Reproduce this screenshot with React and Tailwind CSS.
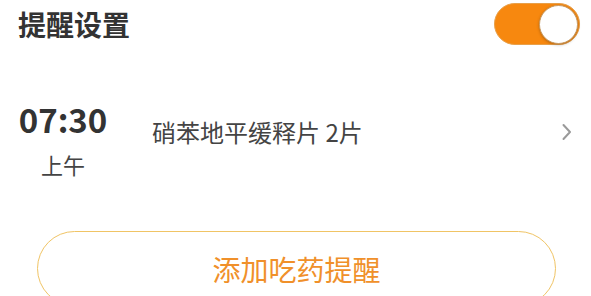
export default function App() {
  return (
    <div
      className="w-[591px] h-[296px] overflow-hidden bg-white text-[#333]"
      style={{ fontFamily: '"Noto Sans CJK SC", "Noto Sans", sans-serif' }}
    >
      <div className="flex items-center justify-between pl-[18px] pr-[11px] h-[46px] pt-[1px]">
        <div className="text-[28px] font-bold leading-none text-[#333]">提醒设置</div>
        <div className="relative w-[86px] h-[42px] rounded-full bg-[#f7880f] border border-[#e8a04a]">
          <div className="absolute right-[1px] top-[1px] w-[39px] h-[39px] rounded-full bg-white border border-[#c89a62] shadow-[0_1px_3px_rgba(0,0,0,0.25)]" />
        </div>
      </div>
      <div className="flex items-start pl-[18px] pr-[18px] mt-[55px]">
        <div className="w-[90px] flex flex-col items-center">
          <div className="text-[33px] font-bold leading-[36px] text-[#333]">07:30</div>
          <div className="text-[22px] leading-[30px] mt-[12px] text-[#444]">上午</div>
        </div>
        <div className="ml-[44px] mt-[15px] text-[24px] leading-[32px] text-[#444] flex-1">硝苯地平缓释片 2片</div>
        <div className="mt-[21px] text-[#999]">
          <svg width="12" height="20" viewBox="0 0 12 20" fill="none">
            <path d="M2.5 3 L9 10 L2.5 17" stroke="#9a9a9a" strokeWidth="2" strokeLinecap="round" strokeLinejoin="round" />
          </svg>
        </div>
      </div>
      <div className="ml-[37px] mr-[35px] mt-[52px] h-[75px] rounded-full border-[1.5px] border-[#f0c465] flex items-center justify-center">
        <span className="text-[28px] text-[#f0902a] leading-none">添加吃药提醒</span>
      </div>
    </div>
  );
}
